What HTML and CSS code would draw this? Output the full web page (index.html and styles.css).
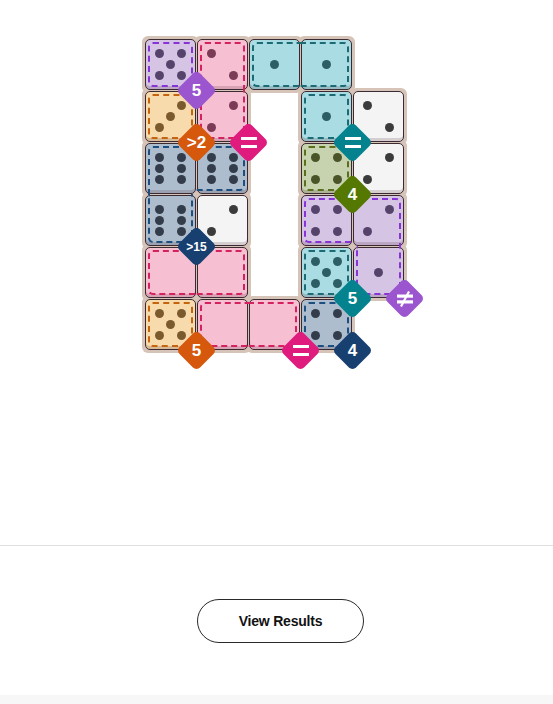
FILE: index.html
```html
<!DOCTYPE html>
<html lang="en">
<head>
<meta charset="utf-8">
<title>Pips</title>
<link rel="stylesheet" href="styles.css">
</head>
<body>
<main class="game">
  <div class="board">
    <!-- row 0 -->
    <div class="cell purple dash"><i class="pip tl"></i><i class="pip tr"></i><i class="pip c"></i><i class="pip bl"></i><i class="pip br"></i></div>
    <div class="cell pink dash open-b"><i class="pip tl"></i><i class="pip br"></i></div>
    <div class="cell teal dash open-r"><i class="pip c"></i></div>
    <div class="cell teal dash open-l"><i class="pip c"></i></div>
    <div class="void"></div>
    <!-- row 1 -->
    <div class="cell peach dash"><i class="pip tr"></i><i class="pip c"></i><i class="pip bl"></i></div>
    <div class="cell pink dash open-t"><i class="pip tr"></i><i class="pip bl"></i></div>
    <div class="void"></div>
    <div class="cell teal dash"><i class="pip c"></i></div>
    <div class="cell white"><i class="pip tl"></i><i class="pip br"></i></div>
    <!-- row 2 -->
    <div class="cell blue dash open-r open-b"><i class="pip tl"></i><i class="pip tr"></i><i class="pip ml"></i><i class="pip mr"></i><i class="pip bl"></i><i class="pip br"></i></div>
    <div class="cell blue dash open-l"><i class="pip tl"></i><i class="pip tr"></i><i class="pip ml"></i><i class="pip mr"></i><i class="pip bl"></i><i class="pip br"></i></div>
    <div class="void"></div>
    <div class="cell green dash"><i class="pip tl"></i><i class="pip tr"></i><i class="pip bl"></i><i class="pip br"></i></div>
    <div class="cell white"><i class="pip tr"></i><i class="pip bl"></i></div>
    <!-- row 3 -->
    <div class="cell blue dash open-t"><i class="pip tl"></i><i class="pip tr"></i><i class="pip ml"></i><i class="pip mr"></i><i class="pip bl"></i><i class="pip br"></i></div>
    <div class="cell white"><i class="pip tr"></i><i class="pip bl"></i></div>
    <div class="void"></div>
    <div class="cell purple dash open-r"><i class="pip tl"></i><i class="pip tr"></i><i class="pip bl"></i><i class="pip br"></i></div>
    <div class="cell purple dash open-l open-b"><i class="pip tr"></i><i class="pip bl"></i></div>
    <!-- row 4 -->
    <div class="cell pink dash open-r"></div>
    <div class="cell pink dash open-l"></div>
    <div class="void"></div>
    <div class="cell teal dash"><i class="pip tl"></i><i class="pip tr"></i><i class="pip c"></i><i class="pip bl"></i><i class="pip br"></i></div>
    <div class="cell purple dash open-t"><i class="pip c"></i></div>
    <!-- row 5 -->
    <div class="cell peach dash"><i class="pip tl"></i><i class="pip tr"></i><i class="pip c"></i><i class="pip bl"></i><i class="pip br"></i></div>
    <div class="cell pink dash open-r"></div>
    <div class="cell pink dash open-l"></div>
    <div class="cell blue dash"><i class="pip tl"></i><i class="pip tr"></i><i class="pip bl"></i><i class="pip br"></i></div>
    <div class="void"></div>

    <!-- constraint badges -->
    <div class="badge b-purple c1 r1">5</div>
    <div class="badge b-orange c1 r2">&gt;2</div>
    <div class="badge b-pink c2 r2"><span class="eq"></span></div>
    <div class="badge b-teal c4 r2"><span class="eq"></span></div>
    <div class="badge b-green c4 r3">4</div>
    <div class="badge b-navy c1 r4 small">&gt;15</div>
    <div class="badge b-teal c4 r5">5</div>
    <div class="badge b-purple c5 r5"><svg class="neq" viewBox="0 0 18 16" width="18" height="16"><rect x="1" y="3.5" width="16" height="3.2" fill="#fff"/><rect x="1" y="9.3" width="16" height="3.2" fill="#fff"/><line x1="5" y1="15.5" x2="13" y2="0.5" stroke="#fff" stroke-width="2.2"/></svg></div>
    <div class="badge b-orange c1 r6">5</div>
    <div class="badge b-pink c3 r6"><span class="eq"></span></div>
    <div class="badge b-navy c4 r6">4</div>
  </div>
</main>
<section class="actions">
  <button class="results-btn" type="button">View Results</button>
</section>
<div class="footer-strip"></div>
</body>
</html>
```
FILE: styles.css
```css
* { box-sizing: border-box; }

html, body {
  margin: 0;
  padding: 0;
  background: #ffffff;
  font-family: "Liberation Sans", Arial, sans-serif;
  color: #121212;
}

.game {
  height: 545px;
  padding-top: 36px;
  display: flex;
  justify-content: center;
  align-items: flex-start;
}

.board {
  position: relative;
  isolation: isolate;
  display: grid;
  grid-template-columns: repeat(5, 51px);
  grid-auto-rows: 51px;
  gap: 1px;
  padding: 3px;
  margin-right: 4px;
}

.cell {
  position: relative;
  background: var(--bg);
  border: 1px solid #3b2a31;
  border-radius: 5px;
  display: grid;
  grid-template-columns: repeat(3, 9.5px);
  grid-template-rows: repeat(3, 9.5px);
  gap: 1.5px;
  place-content: center;
  box-shadow: inset 0 -3px 0 rgba(70, 35, 45, 0.18);
}

/* tan board backing */
.cell::before {
  content: "";
  position: absolute;
  inset: -4px;
  background: #d7c4b9;
  border-radius: 6px;
  z-index: -1;
}

/* dashed region outlines */
.dash::after {
  content: "";
  position: absolute;
  top: 2px;
  right: 2px;
  bottom: 2px;
  left: 2px;
  border: 2px dashed var(--dash);
  border-radius: 5px;
  pointer-events: none;
}
.open-t::after { top: -2px; border-top: 0; border-top-left-radius: 0; border-top-right-radius: 0; }
.open-b::after { bottom: -2px; border-bottom: 0; border-bottom-left-radius: 0; border-bottom-right-radius: 0; }
.open-l::after { left: -2px; border-left: 0; border-top-left-radius: 0; border-bottom-left-radius: 0; }
.open-r::after { right: -2px; border-right: 0; border-top-right-radius: 0; border-bottom-right-radius: 0; }

.pip {
  display: block;
  width: 9.5px;
  height: 9.5px;
  border-radius: 50%;
  background: var(--pip);
}
.pip.tl { grid-area: 1 / 1; }
.pip.tr { grid-area: 1 / 3; }
.pip.ml { grid-area: 2 / 1; }
.pip.c  { grid-area: 2 / 2; }
.pip.mr { grid-area: 2 / 3; }
.pip.bl { grid-area: 3 / 1; }
.pip.br { grid-area: 3 / 3; }

/* region colours */
.purple { --bg: #d5c4e4; --pip: #56436b; --dash: #8733d6; }
.pink   { --bg: #f6bfd2; --pip: #7b3b57; --dash: #d3225f; }
.teal   { --bg: #aadce3; --pip: #2d5e66; --dash: #1c6a73; }
.peach  { --bg: #f8dbad; --pip: #7b5b2d; --dash: #c4640f; }
.blue   { --bg: #aebdcd; --pip: #323c4a; --dash: #1d4e80; }
.green  { --bg: #c6d3ae; --pip: #4a5428; --dash: #5b6e1e; }
.white  { --bg: #f4f4f4; --pip: #3b3b3b; }

/* constraint badges */
.badge {
  position: absolute;
  z-index: 3;
  width: 29px;
  height: 29px;
  display: flex;
  align-items: center;
  justify-content: center;
  color: #ffffff;
  font-family: "Liberation Sans", Arial, sans-serif;
  font-weight: 700;
  font-size: 17px;
  line-height: 1;
  left: calc(3px + var(--c) * 52px - 0.5px - 14.5px);
  top: calc(3px + var(--r) * 52px - 0.5px - 14.5px);
}
.badge::before {
  content: "";
  position: absolute;
  inset: 0;
  background: var(--bc);
  border-radius: 5px;
  transform: rotate(45deg);
  z-index: -1;
}
.badge.small { font-size: 12px; }

.c1 { --c: 1; } .c2 { --c: 2; } .c3 { --c: 3; } .c4 { --c: 4; } .c5 { --c: 5; }
.r1 { --r: 1; } .r2 { --r: 2; } .r3 { --r: 3; } .r4 { --r: 4; } .r5 { --r: 5; } .r6 { --r: 6; }

.b-purple { --bc: #9a55cf; }
.b-orange { --bc: #d5580c; }
.b-pink   { --bc: #df1b7e; }
.b-teal   { --bc: #04838f; }
.b-green  { --bc: #547801; }
.b-navy   { --bc: #173f70; }

.eq {
  display: block;
  width: 16px;
  height: 11px;
  border-top: 3.5px solid #ffffff;
  border-bottom: 3.5px solid #ffffff;
}
.neq { display: block; }

/* bottom actions */
.actions {
  height: 150px;
  border-top: 1px solid #dedede;
  padding-top: 53px;
  display: flex;
  justify-content: center;
  align-items: flex-start;
}

.results-btn {
  width: 167px;
  height: 44px;
  margin-left: 8px;
  border: 1px solid #2a2a2a;
  border-radius: 22px;
  background: #ffffff;
  color: #121212;
  font-family: "Liberation Sans", Arial, sans-serif;
  font-weight: 700;
  font-size: 14px;
  letter-spacing: -0.2px;
  cursor: pointer;
}

.footer-strip {
  height: 9px;
  background: #f7f7f7;
}
```
